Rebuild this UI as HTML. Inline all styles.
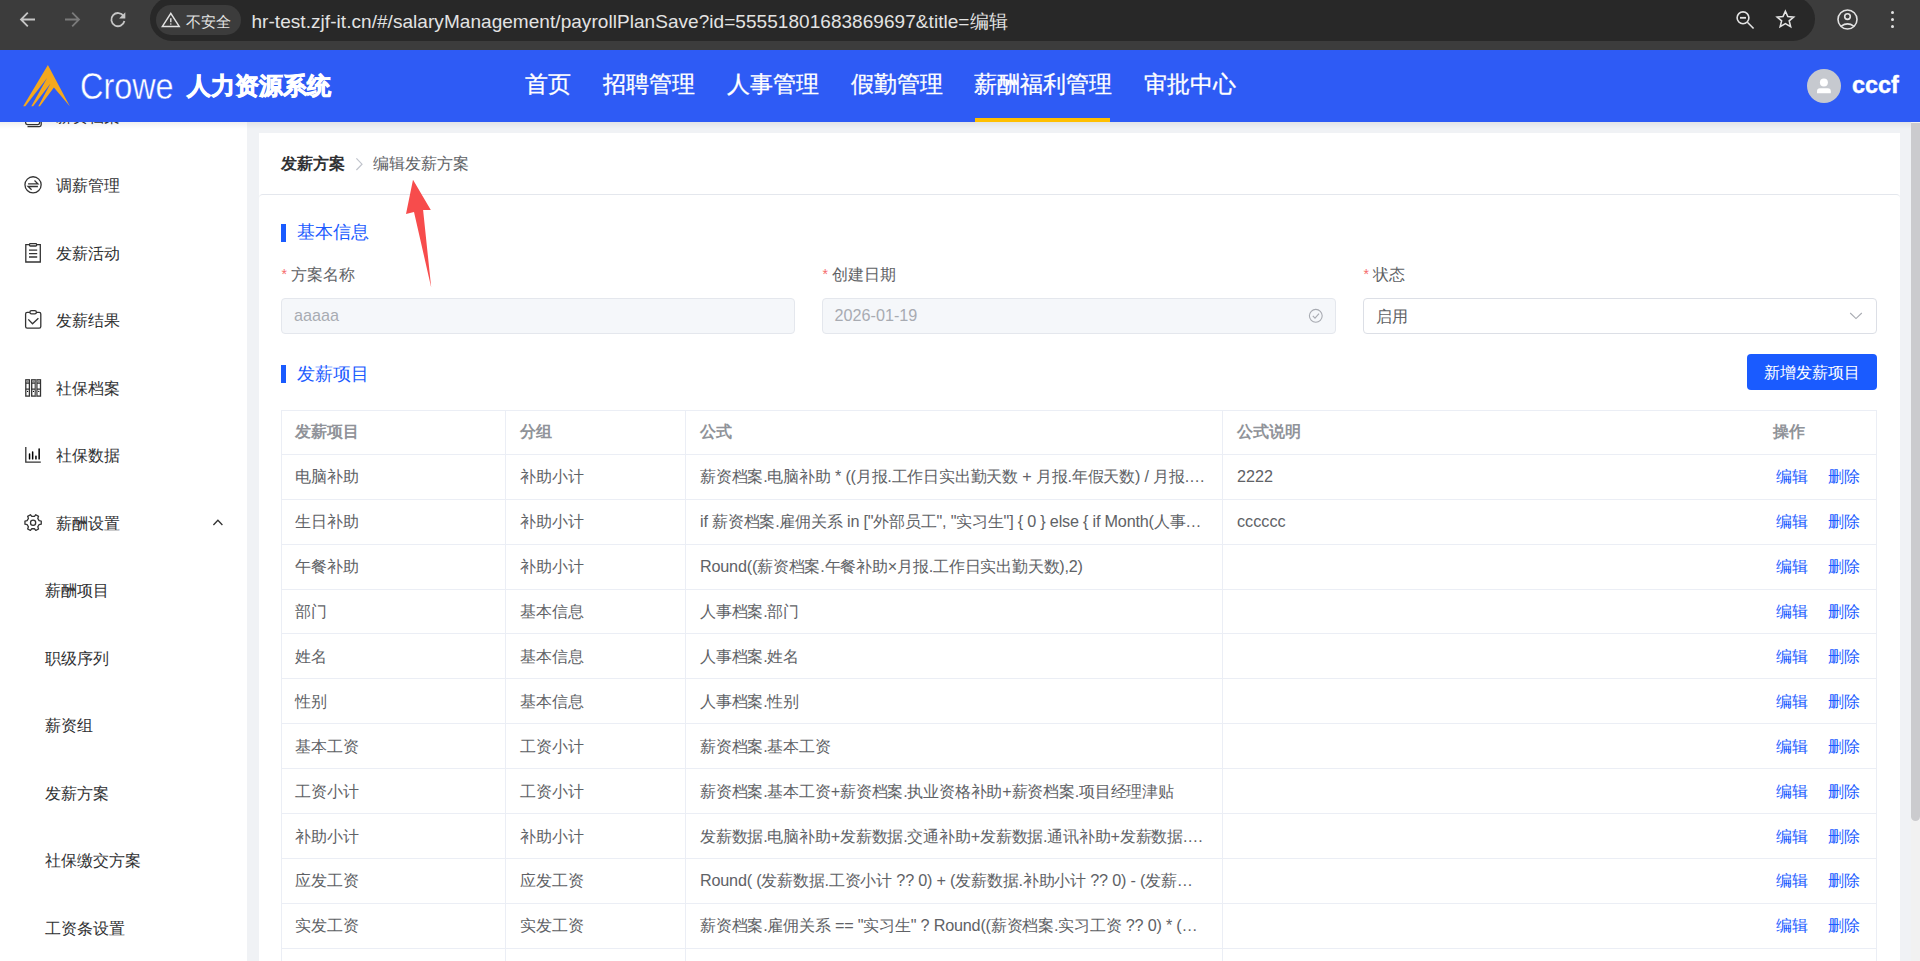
<!DOCTYPE html>
<html><head><meta charset="utf-8">
<style>
*{box-sizing:border-box;margin:0;padding:0}
html,body{width:1920px;height:961px;overflow:hidden;background:#f0f2f5;font-family:"Liberation Sans",sans-serif;position:relative}
.t{position:absolute;white-space:nowrap;line-height:1}
.ln{position:absolute;background:#ebeef5}
svg{position:absolute;overflow:visible}
</style></head><body>
<div style="position:absolute;left:0;top:0;width:1920px;height:50px;background:#3c3c3c"></div>
<div style="position:absolute;left:150px;top:-3.5px;width:1665px;height:44px;border-radius:22px;background:#282828"></div>
<div style="position:absolute;left:156px;top:5px;width:85px;height:30px;border-radius:15px;background:#3c3c3c"></div>
<svg style="left:0;top:0" width="200" height="50"><g fill="none" stroke-width="1.8" stroke-linecap="butt"><path d="M35 19.5H21.5M27.8 12.6L21 19.5L27.8 26.4" stroke="#c6c6c6"/><path d="M65 19.5H78.5M72.2 12.6L79 19.5L72.2 26.4" stroke="#7a7a7a"/><path d="M123.6 16.2A6.6 6.6 0 1 0 124.4 21" stroke="#c6c6c6"/></g><path d="M125.3 12.2V18.4H119.1Z" fill="#c6c6c6"/></svg>
<svg style="left:0;top:0" width="300" height="50"><path d="M170.8 13.4L179.2 26.4H162.4Z" fill="none" stroke="#e3e3e3" stroke-width="1.5" stroke-linejoin="miter"/><path d="M170.8 18.2V22.2" stroke="#e3e3e3" stroke-width="1.4"/><circle cx="170.8" cy="24" r="0.8" fill="#e3e3e3"/></svg>
<div class="t" style="left:186px;top:14.03px;font-size:15px;color:#e3e3e3;">不安全</div>

<div class="t" style="left:251.5px;top:10.5px;font-size:19px;line-height:22px;letter-spacing:0.05px;color:#e3e3e3">hr-test.zjf-it.cn/#/salaryManagement/payrollPlanSave?id=55551801683869697&amp;title=编辑</div>
<svg style="left:0;top:0" width="1920" height="50"><g fill="none" stroke="#e3e3e3" stroke-width="1.6"><circle cx="1743" cy="17.8" r="5.9"/><path d="M1747.4 22.3L1753.6 28.5"/><path d="M1740 17.8H1746" stroke-width="1.8"/><path d="M1785.4 11.2L1787.8 16.6L1793.6 17.1L1789.2 20.9L1790.6 26.6L1785.4 23.6L1780.2 26.6L1781.6 20.9L1777.2 17.1L1783 16.6Z" stroke-linejoin="miter"/><circle cx="1847.5" cy="19.5" r="9.5"/><circle cx="1847.5" cy="16.6" r="2.8"/><path d="M1841.2 26.2Q1847.5 21.6 1853.8 26.2"/></g><g fill="#e3e3e3"><circle cx="1892.5" cy="12.6" r="1.5"/><circle cx="1892.5" cy="19.6" r="1.5"/><circle cx="1892.5" cy="26.5" r="1.5"/></g></svg>
<div style="position:absolute;left:0;top:50px;width:1920px;height:72px;background:#2e5bf5"></div>
<svg style="left:0;top:0" width="400" height="130"><path d="M47.9 64.9L69.8 106.3L53.9 87.6L39.9 106.3L38.3 106.3L50.5 83.4L33.1 106.3L31.3 106.3L47.1 78L25.3 106.3L23.2 106.3Z" fill="#f4a81d"/></svg>
<div class="t" style="left:80px;top:66.5px;font-size:36px;line-height:40px;color:#fff;transform:scaleX(0.9);transform-origin:0 0;-webkit-text-stroke:0.4px #2e5bf5">Crowe</div>
<div class="t" style="left:186.5px;top:73.91px;font-size:24.1px;color:#fff;font-weight:bold;-webkit-text-stroke:0.8px #fff">人力资源系统</div>

<div class="t" style="left:525px;top:73.05px;font-size:23px;color:#fff;-webkit-text-stroke:0.3px #fff">首页</div>

<div class="t" style="left:603px;top:73.05px;font-size:23px;color:#fff;-webkit-text-stroke:0.3px #fff">招聘管理</div>

<div class="t" style="left:727px;top:73.05px;font-size:23px;color:#fff;-webkit-text-stroke:0.3px #fff">人事管理</div>

<div class="t" style="left:851px;top:73.05px;font-size:23px;color:#fff;-webkit-text-stroke:0.3px #fff">假勤管理</div>

<div class="t" style="left:974px;top:73.05px;font-size:23px;color:#fff;-webkit-text-stroke:0.3px #fff">薪酬福利管理</div>

<div class="t" style="left:1144px;top:73.05px;font-size:23px;color:#fff;-webkit-text-stroke:0.3px #fff">审批中心</div>

<div style="position:absolute;left:975px;top:118px;width:135px;height:4px;background:#ffbf00"></div>
<div style="position:absolute;left:1807px;top:69px;width:34px;height:34px;border-radius:50%;background:#c6c9cf"></div>
<svg style="left:0;top:0" width="1920" height="130"><circle cx="1823.9" cy="82.4" r="4" fill="#fff"/><path d="M1817 93.3V91.2Q1817 88.2 1820 88.2H1827.8Q1830.8 88.2 1830.8 91.2V93.3Z" fill="#fff"/></svg>
<div class="t" style="left:1852px;top:72px;font-size:23.4px;line-height:26px;color:#fff;font-weight:bold;-webkit-text-stroke:0.4px #fff">cccf</div>
<div style="position:absolute;left:0;top:122px;width:247px;height:839px;background:#fff;overflow:hidden"><div style="position:absolute;left:0;top:-122px;width:247px;height:961px">
<div class="t" style="left:56px;top:177.44px;font-size:16.2px;color:#303133;">调薪管理</div>

<div class="t" style="left:56px;top:244.94px;font-size:16.2px;color:#303133;">发薪活动</div>

<div class="t" style="left:56px;top:312.44px;font-size:16.2px;color:#303133;">发薪结果</div>

<div class="t" style="left:56px;top:379.94px;font-size:16.2px;color:#303133;">社保档案</div>

<div class="t" style="left:56px;top:447.44px;font-size:16.2px;color:#303133;">社保数据</div>

<div class="t" style="left:56px;top:514.94px;font-size:16.2px;color:#303133;">薪酬设置</div>

<div class="t" style="left:45px;top:582.44px;font-size:16.2px;color:#303133;">薪酬项目</div>

<div class="t" style="left:45px;top:649.94px;font-size:16.2px;color:#303133;">职级序列</div>

<div class="t" style="left:45px;top:717.44px;font-size:16.2px;color:#303133;">薪资组</div>

<div class="t" style="left:45px;top:784.94px;font-size:16.2px;color:#303133;">发薪方案</div>

<div class="t" style="left:45px;top:852.44px;font-size:16.2px;color:#303133;">社保缴交方案</div>

<div class="t" style="left:45px;top:919.94px;font-size:16.2px;color:#303133;">工资条设置</div>

<div class="t" style="left:56px;top:108.44px;font-size:16.2px;color:#303133;">薪资档案</div>

<svg style="left:0;top:0" width="247" height="961"><g fill="none" stroke="#333" stroke-width="1.3"><path d="M25.6 110V122.8Q25.6 124.6 27.4 124.6H38Q39.6 124.6 39.6 122.8V110"/><path d="M41.2 112V124.8Q41.2 126.6 39.4 126.6H27.5"/><circle cx="33.05" cy="184.85" r="8.1"/><path d="M28.1 183.9H37.9L34.5 180.5"/><path d="M37.9 186.5H28.1L31.6 189.7"/><path d="M29.5 244.6H25.8V262H40.3V244.6H36.6"/><rect x="29.5" y="243.6" width="7.1" height="2.4" rx="0.8"/><path d="M29 250.2H37.2M29 253.6H37.2M29 257H37.2"/><path d="M29.9 312.4H27.2Q25.6 312.4 25.6 314V326.6Q25.6 328.2 27.2 328.2H39.2Q40.8 328.2 40.8 326.6V314Q40.8 312.4 39.2 312.4H36.4"/><rect x="29.9" y="310.6" width="6.5" height="3.2" rx="1.6"/><path d="M28.3 319.4L32.5 323.8L38.4 318.3"/><rect x="25.8" y="379.8" width="3.6" height="16.3"/><rect x="31.7" y="379.8" width="3.6" height="16.3"/><rect x="36.9" y="379.8" width="3.6" height="16.3"/><path d="M25.8 389.2H29.4M31.7 389.2H35.3M36.9 389.2H40.5M25.8 383H29.4M31.7 383H35.3M36.9 383H40.5"/><path d="M25.8 447.1V462.2H40.8"/><circle cx="33.1" cy="522.7" r="2.6"/><path d="M39.09 520.65L41.25 521.02L41.25 524.18L39.09 524.55L37.78 526.82L38.55 528.86L35.80 530.45L34.41 528.76L31.79 528.76L30.40 530.45L27.65 528.86L28.42 526.82L27.11 524.55L24.95 524.18L24.95 521.02L27.11 520.65L28.42 518.38L27.65 516.34L30.40 514.75L31.79 516.44L34.41 516.44L35.80 514.75L38.55 516.34L37.78 518.38Z" stroke-linejoin="round"/><path d="M213.4 525L217.9 520.2L222.4 525"/></g><g fill="{ic}"><rect x="26.4" y="380.4" width="2.4" height="2.4" fill="#8a8a8a"/><rect x="32.3" y="380.4" width="2.4" height="2.4" fill="#8a8a8a"/><rect x="37.5" y="380.4" width="2.4" height="2.4" fill="#8a8a8a"/><rect x="35.2" y="379.8" width="1.8" height="16.3" fill="#777"/><circle cx="27.6" cy="391.4" r="0.6"/><circle cx="33.5" cy="391.4" r="0.6"/><circle cx="38.7" cy="391.4" r="0.6"/><rect x="28.8" y="453.2" width="1.5" height="6.4" rx="0.7"/><rect x="31.9" y="451.2" width="1.5" height="8.4" rx="0.7"/><rect x="35.2" y="455.4" width="1.5" height="4.2" rx="0.7"/><rect x="38.4" y="448.2" width="1.5" height="11.4" rx="0.7"/></g></svg>
</div></div>
<div style="position:absolute;left:259px;top:133px;width:1641px;height:830px;background:#fff"></div>
<div style="position:absolute;left:259px;top:194px;width:1641px;height:800px;border-top:1px solid #e4e7ed;border-radius:4px 4px 0 0"></div>
<div style="position:absolute;left:0;top:122px;width:1920px;height:7px;background:linear-gradient(rgba(0,0,0,0.06),rgba(0,0,0,0))"></div>
<div class="t" style="left:281px;top:155.34px;font-size:16.2px;color:#303133;font-weight:bold;">发薪方案</div>

<svg style="left:0;top:0" width="600" height="200"><path d="M356.4 158.3L362 164.2L356.4 170" fill="none" stroke="#c0c4cc" stroke-width="1.2"/></svg>
<div class="t" style="left:373px;top:155.34px;font-size:16.2px;color:#606266;">编辑发薪方案</div>

<div style="position:absolute;left:281px;top:224px;width:5px;height:18px;background:#1a5bff"></div>
<div class="t" style="left:297px;top:223.47px;font-size:18px;color:#1a5bff;">基本信息</div>

<div class="t" style="left:281.5px;top:267px;font-size:14px;color:#f56c6c">*</div>
<div class="t" style="left:291px;top:266.34px;font-size:16.2px;color:#606266;">方案名称</div>

<div class="t" style="left:822.5px;top:267px;font-size:14px;color:#f56c6c">*</div>
<div class="t" style="left:832px;top:266.34px;font-size:16.2px;color:#606266;">创建日期</div>

<div class="t" style="left:1363.5px;top:267px;font-size:14px;color:#f56c6c">*</div>
<div class="t" style="left:1373px;top:266.34px;font-size:16.2px;color:#606266;">状态</div>

<div style="position:absolute;left:281px;top:298px;width:514px;height:36px;border:1px solid #e4e7ed;border-radius:4px;background:#f5f7fa"></div>
<div style="position:absolute;left:822px;top:298px;width:514px;height:36px;border:1px solid #e4e7ed;border-radius:4px;background:#f5f7fa"></div>
<div style="position:absolute;left:1363px;top:298px;width:514px;height:36px;border:1px solid #dcdfe6;border-radius:4px;background:#fff"></div>
<div class="t" style="left:294px;top:305px;font-size:16.2px;line-height:20px;color:#a8abb2">aaaaa</div>
<div class="t" style="left:834.5px;top:305px;font-size:16.2px;line-height:20px;color:#a8abb2">2026-01-19</div>
<svg style="left:0;top:0" width="1920" height="400"><g fill="none" stroke="#a8abb2" stroke-width="1.1"><circle cx="1315.8" cy="315.8" r="6.4"/><path d="M1312.8 315.8L1315 318.2L1319 313.6"/><path d="M1850.2 313L1856 318.6L1861.8 313"/></g></svg>
<div class="t" style="left:1376px;top:308.44px;font-size:16.2px;color:#606266;">启用</div>

<div style="position:absolute;left:281px;top:365px;width:5px;height:18px;background:#1a5bff"></div>
<div class="t" style="left:297px;top:364.87px;font-size:18px;color:#1a5bff;">发薪项目</div>

<div style="position:absolute;left:1747px;top:354px;width:130px;height:36px;border-radius:4px;background:#1a5bff"></div>
<div class="t" style="left:1764px;top:363.94px;font-size:16.2px;color:#fff;">新增发薪项目</div>

<div class="ln" style="left:281px;top:410px;width:1596px;height:1px"></div>
<div class="ln" style="left:281px;top:454px;width:1596px;height:1px"></div>
<div class="ln" style="left:281px;top:499px;width:1596px;height:1px"></div>
<div class="ln" style="left:281px;top:544px;width:1596px;height:1px"></div>
<div class="ln" style="left:281px;top:589px;width:1596px;height:1px"></div>
<div class="ln" style="left:281px;top:633px;width:1596px;height:1px"></div>
<div class="ln" style="left:281px;top:678px;width:1596px;height:1px"></div>
<div class="ln" style="left:281px;top:723px;width:1596px;height:1px"></div>
<div class="ln" style="left:281px;top:768px;width:1596px;height:1px"></div>
<div class="ln" style="left:281px;top:813px;width:1596px;height:1px"></div>
<div class="ln" style="left:281px;top:858px;width:1596px;height:1px"></div>
<div class="ln" style="left:281px;top:903px;width:1596px;height:1px"></div>
<div class="ln" style="left:281px;top:948px;width:1596px;height:1px"></div>
<div class="ln" style="left:281px;top:410px;width:1px;height:560px"></div>
<div class="ln" style="left:505px;top:410px;width:1px;height:560px"></div>
<div class="ln" style="left:685px;top:410px;width:1px;height:560px"></div>
<div class="ln" style="left:1222px;top:410px;width:1px;height:560px"></div>
<div class="ln" style="left:1876px;top:410px;width:1px;height:560px"></div>
<div class="t" style="left:295px;top:423.34px;font-size:16.2px;color:#909399;font-weight:bold;">发薪项目</div>

<div class="t" style="left:520px;top:423.34px;font-size:16.2px;color:#909399;font-weight:bold;">分组</div>

<div class="t" style="left:700px;top:423.34px;font-size:16.2px;color:#909399;font-weight:bold;">公式</div>

<div class="t" style="left:1237px;top:423.34px;font-size:16.2px;color:#909399;font-weight:bold;">公式说明</div>

<div class="t" style="left:1773px;top:423.34px;font-size:16.2px;color:#909399;font-weight:bold;">操作</div>

<div class="t" style="left:295px;top:468.14px;font-size:16.2px;color:#606266;">电脑补助</div>

<div class="t" style="left:520px;top:468.14px;font-size:16.2px;color:#606266;">补助小计</div>

<div class="t" style="left:700px;top:468.14px;font-size:16.2px;color:#606266;letter-spacing:-0.2px">薪资档案.电脑补助 * ((月报.工作日实出勤天数 + 月报.年假天数) / 月报.…</div>

<div class="t" style="left:1237px;top:468.14px;font-size:16.2px;color:#606266;">2222</div>

<div class="t" style="left:1776px;top:468.14px;font-size:16.2px;color:#1a5bff;">编辑</div>

<div class="t" style="left:1828px;top:468.14px;font-size:16.2px;color:#1a5bff;">删除</div>

<div class="t" style="left:295px;top:513.06px;font-size:16.2px;color:#606266;">生日补助</div>

<div class="t" style="left:520px;top:513.06px;font-size:16.2px;color:#606266;">补助小计</div>

<div class="t" style="left:700px;top:513.06px;font-size:16.2px;color:#606266;letter-spacing:-0.2px">if 薪资档案.雇佣关系 in [&quot;外部员工&quot;, &quot;实习生&quot;] { 0 } else { if Month(人事…</div>

<div class="t" style="left:1237px;top:513.06px;font-size:16.2px;color:#606266;">cccccc</div>

<div class="t" style="left:1776px;top:513.06px;font-size:16.2px;color:#1a5bff;">编辑</div>

<div class="t" style="left:1828px;top:513.06px;font-size:16.2px;color:#1a5bff;">删除</div>

<div class="t" style="left:295px;top:557.98px;font-size:16.2px;color:#606266;">午餐补助</div>

<div class="t" style="left:520px;top:557.98px;font-size:16.2px;color:#606266;">补助小计</div>

<div class="t" style="left:700px;top:557.98px;font-size:16.2px;color:#606266;letter-spacing:-0.2px">Round((薪资档案.午餐补助×月报.工作日实出勤天数),2)</div>

<div class="t" style="left:1776px;top:557.98px;font-size:16.2px;color:#1a5bff;">编辑</div>

<div class="t" style="left:1828px;top:557.98px;font-size:16.2px;color:#1a5bff;">删除</div>

<div class="t" style="left:295px;top:602.90px;font-size:16.2px;color:#606266;">部门</div>

<div class="t" style="left:520px;top:602.90px;font-size:16.2px;color:#606266;">基本信息</div>

<div class="t" style="left:700px;top:602.90px;font-size:16.2px;color:#606266;letter-spacing:-0.2px">人事档案.部门</div>

<div class="t" style="left:1776px;top:602.90px;font-size:16.2px;color:#1a5bff;">编辑</div>

<div class="t" style="left:1828px;top:602.90px;font-size:16.2px;color:#1a5bff;">删除</div>

<div class="t" style="left:295px;top:647.82px;font-size:16.2px;color:#606266;">姓名</div>

<div class="t" style="left:520px;top:647.82px;font-size:16.2px;color:#606266;">基本信息</div>

<div class="t" style="left:700px;top:647.82px;font-size:16.2px;color:#606266;letter-spacing:-0.2px">人事档案.姓名</div>

<div class="t" style="left:1776px;top:647.82px;font-size:16.2px;color:#1a5bff;">编辑</div>

<div class="t" style="left:1828px;top:647.82px;font-size:16.2px;color:#1a5bff;">删除</div>

<div class="t" style="left:295px;top:692.74px;font-size:16.2px;color:#606266;">性别</div>

<div class="t" style="left:520px;top:692.74px;font-size:16.2px;color:#606266;">基本信息</div>

<div class="t" style="left:700px;top:692.74px;font-size:16.2px;color:#606266;letter-spacing:-0.2px">人事档案.性别</div>

<div class="t" style="left:1776px;top:692.74px;font-size:16.2px;color:#1a5bff;">编辑</div>

<div class="t" style="left:1828px;top:692.74px;font-size:16.2px;color:#1a5bff;">删除</div>

<div class="t" style="left:295px;top:737.66px;font-size:16.2px;color:#606266;">基本工资</div>

<div class="t" style="left:520px;top:737.66px;font-size:16.2px;color:#606266;">工资小计</div>

<div class="t" style="left:700px;top:737.66px;font-size:16.2px;color:#606266;letter-spacing:-0.2px">薪资档案.基本工资</div>

<div class="t" style="left:1776px;top:737.66px;font-size:16.2px;color:#1a5bff;">编辑</div>

<div class="t" style="left:1828px;top:737.66px;font-size:16.2px;color:#1a5bff;">删除</div>

<div class="t" style="left:295px;top:782.58px;font-size:16.2px;color:#606266;">工资小计</div>

<div class="t" style="left:520px;top:782.58px;font-size:16.2px;color:#606266;">工资小计</div>

<div class="t" style="left:700px;top:782.58px;font-size:16.2px;color:#606266;letter-spacing:-0.2px">薪资档案.基本工资+薪资档案.执业资格补助+薪资档案.项目经理津贴</div>

<div class="t" style="left:1776px;top:782.58px;font-size:16.2px;color:#1a5bff;">编辑</div>

<div class="t" style="left:1828px;top:782.58px;font-size:16.2px;color:#1a5bff;">删除</div>

<div class="t" style="left:295px;top:827.50px;font-size:16.2px;color:#606266;">补助小计</div>

<div class="t" style="left:520px;top:827.50px;font-size:16.2px;color:#606266;">补助小计</div>

<div class="t" style="left:700px;top:827.50px;font-size:16.2px;color:#606266;letter-spacing:-0.2px">发薪数据.电脑补助+发薪数据.交通补助+发薪数据.通讯补助+发薪数据.…</div>

<div class="t" style="left:1776px;top:827.50px;font-size:16.2px;color:#1a5bff;">编辑</div>

<div class="t" style="left:1828px;top:827.50px;font-size:16.2px;color:#1a5bff;">删除</div>

<div class="t" style="left:295px;top:872.42px;font-size:16.2px;color:#606266;">应发工资</div>

<div class="t" style="left:520px;top:872.42px;font-size:16.2px;color:#606266;">应发工资</div>

<div class="t" style="left:700px;top:872.42px;font-size:16.2px;color:#606266;letter-spacing:-0.2px">Round( (发薪数据.工资小计 ?? 0) + (发薪数据.补助小计 ?? 0) - (发薪…</div>

<div class="t" style="left:1776px;top:872.42px;font-size:16.2px;color:#1a5bff;">编辑</div>

<div class="t" style="left:1828px;top:872.42px;font-size:16.2px;color:#1a5bff;">删除</div>

<div class="t" style="left:295px;top:917.34px;font-size:16.2px;color:#606266;">实发工资</div>

<div class="t" style="left:520px;top:917.34px;font-size:16.2px;color:#606266;">实发工资</div>

<div class="t" style="left:700px;top:917.34px;font-size:16.2px;color:#606266;letter-spacing:-0.2px">薪资档案.雇佣关系 == &quot;实习生&quot; ? Round((薪资档案.实习工资 ?? 0) * (…</div>

<div class="t" style="left:1776px;top:917.34px;font-size:16.2px;color:#1a5bff;">编辑</div>

<div class="t" style="left:1828px;top:917.34px;font-size:16.2px;color:#1a5bff;">删除</div>

<svg style="left:0;top:0" width="600" height="400"><path d="M413 179.7L430.8 209.9L423.1 209.9L431.2 287.6L414 211.9L406 213.9Z" fill="#f74c4c"/></svg>
<div style="position:absolute;left:1911px;top:122px;width:9px;height:839px;background:#f1f1f1"></div>
<div style="position:absolute;left:1911px;top:123px;width:9px;height:698px;border-radius:0 0 4.5px 4.5px;background:#cbcbce"></div>
</body></html>
